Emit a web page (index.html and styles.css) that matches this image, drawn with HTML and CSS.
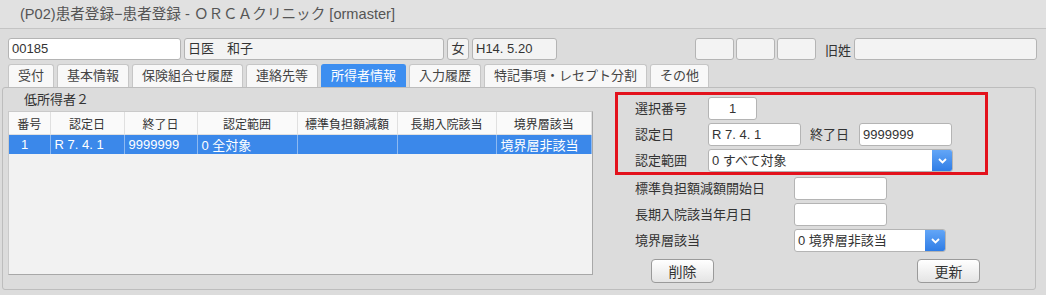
FILE: index.html
```html
<!DOCTYPE html>
<html lang="ja">
<head>
    <meta charset="UTF-8">
    <title>患者登録</title>
    <link rel="stylesheet" href="styles.css">
</head>
<body>
    <!-- Window title -->
    <div class="titlebar">(P02)患者登録−患者登録 - ＯＲＣＡクリニック [ormaster]</div>

    <!-- Patient summary -->
    <div class="patient-row">
        <div class="field field-id">00185</div>
        <div class="field field-name readonly">日医　和子</div>
        <div class="field field-sex readonly">女</div>
        <div class="field field-birth readonly">H14. 5.20</div>
        <div class="box-group">
            <div class="field field-small readonly"></div>
            <div class="field field-small readonly"></div>
            <div class="field field-small readonly"></div>
        </div>
        <span class="old-name-label">旧姓</span>
        <div class="field field-oldname readonly"></div>
    </div>

    <!-- Tabs -->
    <div class="tabs">
        <div class="tab">受付</div>
        <div class="tab">基本情報</div>
        <div class="tab">保険組合せ履歴</div>
        <div class="tab">連絡先等</div>
        <div class="tab active">所得者情報</div>
        <div class="tab">入力履歴</div>
        <div class="tab">特記事項・レセプト分割</div>
        <div class="tab">その他</div>
    </div>

    <!-- Tab content -->
    <div class="panel">
        <div class="panel-left">
            <div class="panel-caption">低所得者２</div>
            <div class="list">
                <table>
                    <colgroup>
                        <col style="width: 41px">
                        <col style="width: 74px">
                        <col style="width: 73px">
                        <col style="width: 100px">
                        <col style="width: 100px">
                        <col style="width: 99px">
                        <col>
                    </colgroup>
                    <tr>
                        <th>番号</th>
                        <th>認定日</th>
                        <th>終了日</th>
                        <th>認定範囲</th>
                        <th>標準負担額減額</th>
                        <th>長期入院該当</th>
                        <th>境界層該当</th>
                    </tr>
                    <tr class="selected">
                        <td class="num">1</td>
                        <td>R 7. 4. 1</td>
                        <td>9999999</td>
                        <td>0 全対象</td>
                        <td></td>
                        <td></td>
                        <td>境界層非該当</td>
                    </tr>
                </table>
            </div>
        </div>

        <div class="panel-right">
            <div class="highlight">
                <div class="form-row">
                    <label>選択番号</label>
                    <div class="input input-no">1</div>
                </div>
                <div class="form-row">
                    <label>認定日</label>
                    <div class="input input-date">R 7. 4. 1</div>
                    <label class="inline-label">終了日</label>
                    <div class="input input-date">9999999</div>
                </div>
                <div class="form-row">
                    <label>認定範囲</label>
                    <div class="select select-wide">
                        <span class="select-value">0 すべて対象</span>
                        <span class="select-arrow">
                            <svg width="9" height="6" viewBox="0 0 9 6"><path d="M1 1l3.5 3.5L8 1" fill="none" stroke="#fff" stroke-width="1.8"/></svg>
                        </span>
                    </div>
                </div>
            </div>

            <div class="form-rows">
                <div class="form-row">
                    <label>標準負担額減額開始日</label>
                    <div class="input input-date"></div>
                </div>
                <div class="form-row">
                    <label>長期入院該当年月日</label>
                    <div class="input input-date"></div>
                </div>
                <div class="form-row">
                    <label>境界層該当</label>
                    <div class="select select-short">
                        <span class="select-value">0 境界層非該当</span>
                        <span class="select-arrow">
                            <svg width="9" height="6" viewBox="0 0 9 6"><path d="M1 1l3.5 3.5L8 1" fill="none" stroke="#fff" stroke-width="1.8"/></svg>
                        </span>
                    </div>
                </div>
            </div>

            <div class="actions">
                <button class="button">削除</button>
                <button class="button">更新</button>
            </div>
        </div>
    </div>
</body>
</html>
```

FILE: styles.css
```css
body {
    margin: 0;
    background: #dcdcdc;
    font-family: "Liberation Sans", "Noto Sans CJK JP", sans-serif;
    font-size: 13px;
    color: #333;
}

.titlebar {
    height: 28px;
    line-height: 28px;
    padding-left: 20px;
    font-size: 14.6px;
    color: #555;
    background: #e1e1e1;
    border-bottom: 1px solid #c4c4c4;
    white-space: nowrap;
}

/* Patient summary row */
.patient-row {
    display: flex;
    align-items: center;
    gap: 3px;
    margin-top: 9px;
    padding: 0 9px 0 8px;
}

.field {
    box-sizing: border-box;
    height: 22px;
    line-height: 20px;
    padding: 0 3px;
    background: #fff;
    border: 1px solid #b4b4b4;
    border-radius: 3px;
    white-space: nowrap;
}

.field.readonly {
    background: #f3f3f3;
}

.field-id { width: 173px; }
.field-name { width: 260px; }
.field-sex { width: 22px; padding: 0; text-align: center; }
.field-birth { width: 85px; }
.field-small { width: 39px; }
.field-oldname { width: 183px; }

.box-group {
    display: flex;
    gap: 2px;
    margin-left: auto;
    margin-right: 6px;
}

.old-name-label {
    width: 26px;
}

/* Tabs */
.tabs {
    display: flex;
    gap: 3px;
    margin-top: 4px;
    padding-left: 8px;
}

.tab {
    box-sizing: border-box;
    height: 23px;
    line-height: 22px;
    padding: 0 9px;
    background: #f8f8f8;
    border: 1px solid #c6c6c6;
    border-bottom: none;
    border-radius: 3px 3px 0 0;
    color: #444;
    white-space: nowrap;
}

.tab.active {
    background: #3d8ef0;
    border-color: #3d8ef0;
    color: #fff;
}

/* Panel */
.panel {
    display: flex;
    box-sizing: border-box;
    height: 203px;
    margin: 0 10px 0 2px;
    border: 1px solid #bdbdbd;
    border-radius: 3px;
}

.panel-left {
    padding-left: 5px;
}

.panel-caption {
    height: 23px;
    line-height: 23px;
    padding-left: 16px;
}

.list {
    box-sizing: border-box;
    width: 585px;
    height: 164px;
    background: #f2f2f2;
    border: 1px solid #cacaca;
    border-right-color: #a8a8a8;
    border-bottom-color: #a8a8a8;
}

.list table {
    width: 100%;
    border-collapse: collapse;
    table-layout: fixed;
}

.list th {
    height: 22px;
    padding: 0;
    background: #fafafa;
    font-size: 12px;
    font-weight: normal;
    border-right: 1px solid #e0e0e0;
    border-bottom: 1px solid #e0e0e0;
}

.list td {
    height: 18px;
    padding: 0 4px;
    background: #3b88ea;
    color: #fff;
    border-right: 1px solid #8db9f1;
    white-space: nowrap;
    overflow: hidden;
}

.list td.num {
    padding-left: 12px;
}

/* Right side form */
.panel-right {
    width: 373px;
    margin: 4px 0 0 22px;
}

.highlight {
    display: flex;
    flex-direction: column;
    gap: 3px;
    box-sizing: border-box;
    height: 83px;
    padding: 2px 0 0 17px;
    border: 3px solid #e3121c;
}

.highlight .form-row label {
    width: 73px;
}

.form-rows {
    display: flex;
    flex-direction: column;
    gap: 3px;
    margin-top: 2px;
    padding-left: 20px;
}

.form-rows .form-row label {
    width: 159px;
}

.form-row {
    display: flex;
    align-items: center;
    height: 23px;
}

.form-row label {
    margin-top: -2px;
}

.form-row label.inline-label {
    width: auto;
    margin: -2px 10px 0 9px;
}

.input {
    box-sizing: border-box;
    height: 23px;
    line-height: 21px;
    padding: 0 3px;
    background: #fff;
    border: 1px solid #b4b4b4;
    border-radius: 3px;
    white-space: nowrap;
}

.input-no { width: 49px; text-align: center; }
.input-date { width: 93px; }

.select {
    display: flex;
    box-sizing: border-box;
    height: 23px;
    background: #fff;
    border: 1px solid #b4b4b4;
    border-radius: 3px;
    overflow: hidden;
}

.select-wide { width: 245px; }
.select-short { width: 152px; }

.select-value {
    flex: 1;
    line-height: 21px;
    padding-left: 3px;
    white-space: nowrap;
}

.select-arrow {
    display: flex;
    align-items: center;
    justify-content: center;
    width: 20px;
    background: linear-gradient(#63a6f7, #2f7de6);
}

.actions {
    display: flex;
    justify-content: space-between;
    margin-top: 7px;
    padding: 0 8px 0 36px;
}

.button {
    box-sizing: border-box;
    width: 63px;
    height: 24px;
    padding: 0;
    background: linear-gradient(#ffffff, #e4e4e4);
    border: 1px solid #9a9a9a;
    border-radius: 4px;
    font-family: inherit;
    font-size: 14px;
    color: #333;
}
```
